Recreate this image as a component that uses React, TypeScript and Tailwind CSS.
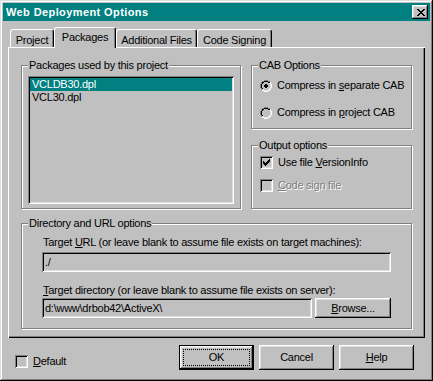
import React from "react";

const raisedBtn =
  "shadow-[inset_-1px_-1px_#000,inset_1px_1px_#fff,inset_-2px_-2px_#808080,inset_2px_2px_#dfdfdf]";
const sunken =
  "shadow-[inset_1px_1px_#808080,inset_-1px_-1px_#fff,inset_2px_2px_#000,inset_-2px_-2px_#dfdfdf]";
const etched = "border border-[#808080] shadow-[inset_1px_1px_#fff,1px_1px_#fff]";

const COLORS: Record<string, string> = {
  G: "#808080",
  K: "#000000",
  L: "#dfdfdf",
  W: "#ffffff",
  F: "#c0c0c0",
};

function Bitmap({ rows, className }: { rows: string[]; className?: string }) {
  const w = rows[0].length;
  const h = rows.length;
  const rects: React.ReactNode[] = [];
  rows.forEach((r, y) => {
    for (let x = 0; x < r.length; x++) {
      const c = COLORS[r[x]];
      if (c) rects.push(<rect key={`${x}-${y}`} x={x} y={y} width={1} height={1} fill={c} />);
    }
  });
  return (
    <svg className={className} width={w} height={h} viewBox={`0 0 ${w} ${h}`} shapeRendering="crispEdges">
      {rects}
    </svg>
  );
}

const RADIO = [
  "....GGGG....",
  "..GGKKKKGG..",
  ".GKKFFFFKKW.",
  ".GKFFFFFFLW.",
  "GKFFFFFFFFLW",
  "GKFFFFFFFFLW",
  "GKFFFFFFFFLW",
  "GKFFFFFFFFLW",
  ".GKFFFFFFLW.",
  ".GLLFFFFLLW.",
  "..WWLLLLWW..",
  "....WWWW....",
];
const RADIO_ON = RADIO.map((r, y) => {
  const dot: Record<number, string> = { 4: ".KK.", 5: "KKKK", 6: "KKKK", 7: ".KK." };
  if (!dot[y]) return r;
  const d = dot[y];
  const out = r.split("");
  for (let i = 0; i < 4; i++) if (d[i] === "K") out[4 + i] = "K";
  return out.join("");
});

const CHECK = [
  "......K",
  ".....KK",
  "K...KKK",
  "KK.KKK.",
  "KKKKK..",
  ".KKK...",
  "..K....",
];

const CLOSE_X = [
  "KK....KK",
  ".KK..KK.",
  "..KKKK..",
  "...KK...",
  "..KKKK..",
  ".KK..KK.",
  "KK....KK",
];

function CheckBox({ checked }: { checked?: boolean }) {
  return (
    <div className={`w-[13px] h-[13px] shrink-0 bg-[#c0c0c0] flex items-center justify-center ${sunken}`}>
      {checked && <Bitmap rows={CHECK} />}
    </div>
  );
}

function Radio({ checked }: { checked?: boolean }) {
  return <Bitmap rows={checked ? RADIO_ON : RADIO} className="shrink-0" />;
}

function Group({
  label,
  className,
  children,
}: {
  label: string;
  className: string;
  children?: React.ReactNode;
}) {
  return (
    <div className={`relative ${etched} ${className}`}>
      <span className="absolute top-[-7px] left-[6px] px-px bg-[#c0c0c0] whitespace-nowrap">{label}</span>
      {children}
    </div>
  );
}

function Tab({ w, selected, children }: { w: string; selected?: boolean; children: React.ReactNode }) {
  if (selected) {
    return (
      <div
        className={`${w} relative z-10 -mb-px h-[21px] bg-[#c0c0c0] flex justify-center pt-[3px] rounded-t-[3px] border-l border-t border-white border-r border-r-black shadow-[inset_-1px_0_#808080]`}
      >
        {children}
      </div>
    );
  }
  return (
    <div
      className={`${w} h-[18px] flex justify-center pt-[4px] rounded-t-[3px] border-l border-t border-white border-r border-r-black shadow-[inset_-1px_0_#808080]`}
    >
      {children}
    </div>
  );
}

function Button({
  children,
  isDefault,
  className = "",
}: {
  children: React.ReactNode;
  isDefault?: boolean;
  className?: string;
}) {
  if (isDefault) {
    return (
      <div className={`border border-black flex ${className}`}>
        <div className={`flex-1 flex p-[3px] ${raisedBtn}`}>
          <div className="flex-1 border border-dotted border-black flex items-center justify-center">{children}</div>
        </div>
      </div>
    );
  }
  return <div className={`flex items-center justify-center ${raisedBtn} ${className}`}>{children}</div>;
}

export default function App() {
  return (
    <div className="w-[433px] h-[381px] bg-[#c0c0c0] p-[3px] flex flex-col text-[11px] leading-[13px] text-black tracking-[-0.25px] [font-family:'Liberation_Sans',Arial,sans-serif] shadow-[inset_-1px_-1px_#000,inset_1px_1px_#dfdfdf,inset_-2px_-2px_#808080,inset_2px_2px_#fff] select-none">
      {/* Title bar */}
      <div className="h-[18px] shrink-0 bg-[#008080] flex items-center justify-between pl-[3px] pr-[2px]">
        <span className="text-white font-bold tracking-[0.4px]">Web Deployment Options</span>
        <div className={`w-[16px] h-[14px] bg-[#c0c0c0] flex items-center justify-center pl-px ${raisedBtn}`}>
          <Bitmap rows={CLOSE_X} />
        </div>
      </div>

      <div className="px-[5px] mt-[6px] flex flex-col">
        {/* Tabs */}
        <div className="flex items-end h-[20px] pl-[2px]">
          <Tab w="w-[44px]">Project</Tab>
          <Tab w="w-[62px]" selected>
            Packages
          </Tab>
          <Tab w="w-[81px]">Additional Files</Tab>
          <Tab w="w-[75px]">Code Signing</Tab>
        </div>

        {/* Panel */}
        <div className="h-[291px] shadow-[inset_1px_1px_#fff,inset_-1px_-1px_#000,inset_-2px_-2px_#808080] pt-[18px] px-[13px] flex flex-col">
          <div className="flex gap-[10px]">
            <Group label="Packages used by this project" className="w-[220px] h-[144px] pt-[10px] pl-[6px]">
              <div className={`w-[206px] h-[128px] p-[2px] ${sunken}`}>
                <div className="h-[13px] bg-[#008080] text-white px-[2px]">VCLDB30.dpl</div>
                <div className="h-[13px] px-[2px]">VCL30.dpl</div>
              </div>
            </Group>

            <div className="w-[161px] flex flex-col gap-[16px]">
              <Group label="CAB Options" className="h-[64px] pt-[13px] pl-[8px] flex flex-col gap-[14px]">
                <div className="h-[13px] flex items-center gap-[5px]">
                  <Radio checked />
                  <span>
                    Compress in <u>s</u>eparate CAB
                  </span>
                </div>
                <div className="h-[13px] flex items-center gap-[5px]">
                  <Radio />
                  <span>
                    Compress in <u>p</u>roject CAB
                  </span>
                </div>
              </Group>

              <Group label="Output options" className="h-[64px] pt-[10px] pl-[8px] flex flex-col gap-[10px]">
                <div className="h-[13px] flex items-center gap-[5px]">
                  <CheckBox checked />
                  <span>
                    Use file <u>V</u>ersionInfo
                  </span>
                </div>
                <div className="h-[13px] flex items-center gap-[5px]">
                  <CheckBox />
                  <span className="text-[#808080] [text-shadow:1px_1px_0_#fff]">
                    <u>C</u>ode sign file
                  </span>
                </div>
              </Group>
            </div>
          </div>

          <Group label="Directory and URL options" className="mt-[14px] w-[391px] h-[106px] pt-[12px] pl-[20px] flex flex-col">
            <div className="pl-px">
              Target <u>U</u>RL (or leave blank to assume file exists on target machines):
            </div>
            <div className={`mt-[3px] w-[349px] h-[20px] px-[3px] flex items-center ${sunken}`}>./</div>
            <div className="pl-px mt-[12px]">
              <u>T</u>arget directory (or leave blank to assume file exists on server):
            </div>
            <div className="mt-px flex gap-[3px]">
              <div className={`w-[270px] h-[20px] px-[3px] flex items-center ${sunken}`}>d:\www\drbob42\ActiveX\</div>
              <Button className="w-[76px] h-[20px]">
                <span>
                  <u>B</u>rowse...
                </span>
              </Button>
            </div>
          </Group>
        </div>
      </div>

      {/* Bottom row */}
      <div className="mt-[7px] flex items-start pl-[12px] pr-[16px]">
        <div className="mt-[10px] flex items-center gap-[5px]">
          <CheckBox />
          <span>
            <u>D</u>efault
          </span>
        </div>
        <div className="ml-auto flex gap-[5px]">
          <Button isDefault className="w-[75px] h-[25px]">
            OK
          </Button>
          <Button className="w-[75px] h-[25px]">Cancel</Button>
          <Button className="w-[75px] h-[25px]">
            <span>
              <u>H</u>elp
            </span>
          </Button>
        </div>
      </div>
    </div>
  );
}
